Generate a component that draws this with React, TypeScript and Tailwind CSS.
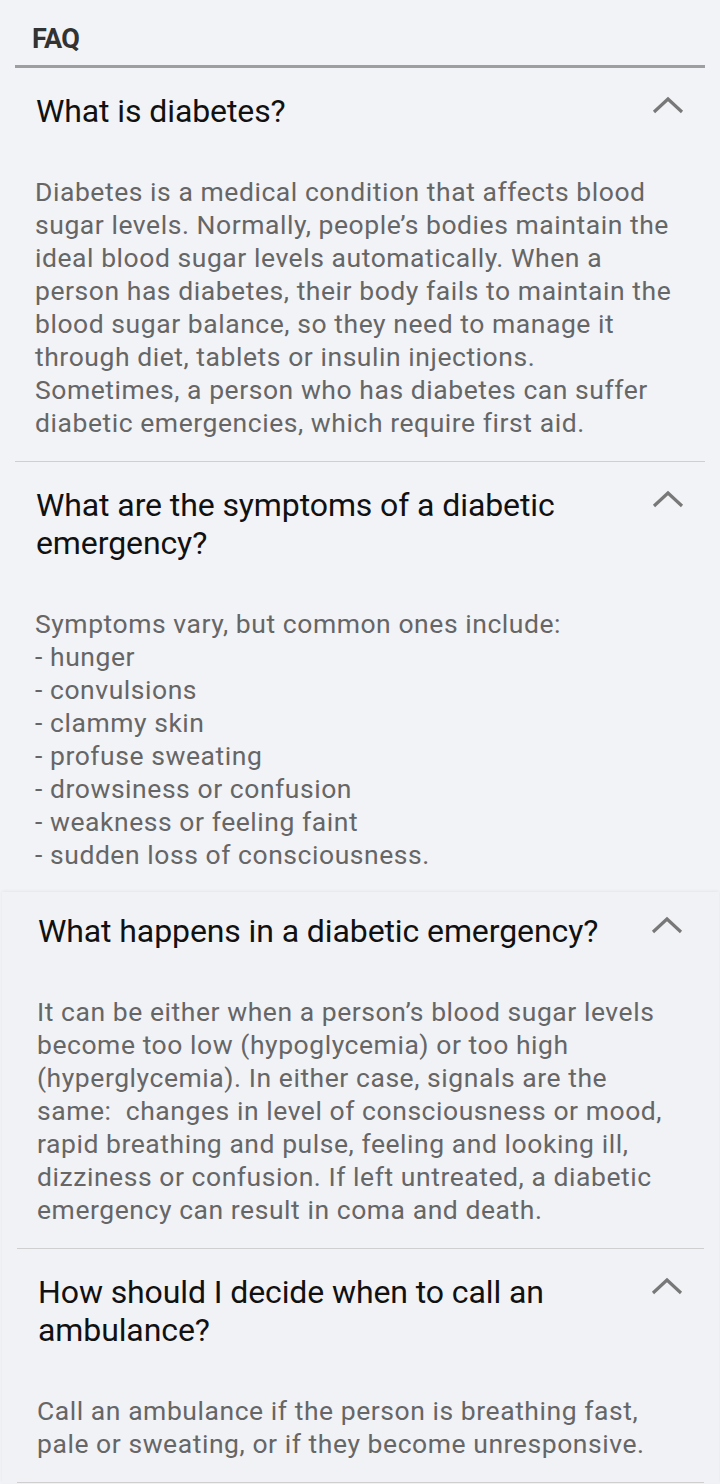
const faqs = [
  {
    q: 'What is diabetes?',
    a: [
      'Diabetes is a medical condition that affects blood sugar levels. Normally, people\u2019s bodies maintain the ideal blood sugar levels automatically. When a person has diabetes, their body fails to maintain the blood sugar balance, so they need to manage it through diet, tablets or insulin injections. Sometimes, a person who has diabetes can suffer diabetic emergencies, which require first aid.',
    ],
  },
  {
    q: 'What are the symptoms of a diabetic emergency?',
    a: [
      'Symptoms vary, but common ones include:',
      '- hunger',
      '- convulsions',
      '- clammy skin',
      '- profuse sweating',
      '- drowsiness or confusion',
      '- weakness or feeling faint',
      '- sudden loss of consciousness.',
    ],
  },
  {
    q: 'What happens in a diabetic emergency?',
    a: [
      'It can be either when a person\u2019s blood sugar levels become too low (hypoglycemia) or too high (hyperglycemia). In either case, signals are the same:\u00a0 changes in level of consciousness or mood, rapid breathing and pulse, feeling and looking ill, dizziness or confusion. If left untreated, a diabetic emergency can result in coma and death.',
    ],
  },
  {
    q: 'How should I decide when to call an ambulance?',
    a: [
      'Call an ambulance if the person is breathing fast, pale or sweating, or if they become unresponsive.',
    ],
  },
];

const Chevron = () => (
  <svg width="34" height="20" viewBox="0 0 34 20" className="shrink-0 mt-[4px]">
    <path d="M3 16 L17 3 L31 16" fill="none" stroke="#787878" strokeWidth="3.2" />
  </svg>
);

type Item = { q: string; a: string[] };

const FaqItem = ({ item, last, first }: { item: Item; last?: boolean; first?: boolean }) => (
  <div className={`${first ? 'pt-[20px]' : 'pt-[24px]'} pb-[22px] ${last ? '' : 'border-b border-[#cfcfcf]'}`}>
    <div className="flex items-start justify-between pl-[21px] pr-[20px]">
      <div className="text-[32px] leading-[38px] text-[#111] max-w-[580px] tracking-[-0.1px]">{item.q}</div>
      <Chevron />
    </div>
    <div className="mt-[45px] pl-[20px] pr-[24px] text-[26.5px] leading-[33px] tracking-[0.55px] text-[#666]">
      {item.a.map((line, i) => (
        <div key={i}>{line}</div>
      ))}
    </div>
  </div>
);

export default function App() {
  return (
    <div className="w-[720px] h-[1484px] overflow-hidden bg-[#f2f3f7]" style={{ fontFamily: 'Roboto, "Noto Sans", sans-serif' }}>
      <div className="h-[892px] overflow-hidden">
        <div className="mx-[15px] pt-[23px] pb-[10px] pl-[17px] border-b-[3px] border-[#9e9e9e]">
          <div className="text-[27px] leading-[32px] font-bold text-[#333] tracking-[-0.5px]">FAQ</div>
        </div>
        <div className="mx-[15px]">
          <FaqItem item={faqs[0]} />
          <FaqItem item={faqs[1]} last />
        </div>
      </div>
      <div className="ml-[2px] mr-[1px] bg-[#f1f2f6] shadow-[0_-1px_3px_rgba(0,0,0,0.06)]">
        <div className="mx-[15px]">
          <FaqItem item={faqs[2]} first />
          <FaqItem item={faqs[3]} />
        </div>
      </div>
    </div>
  );
}
